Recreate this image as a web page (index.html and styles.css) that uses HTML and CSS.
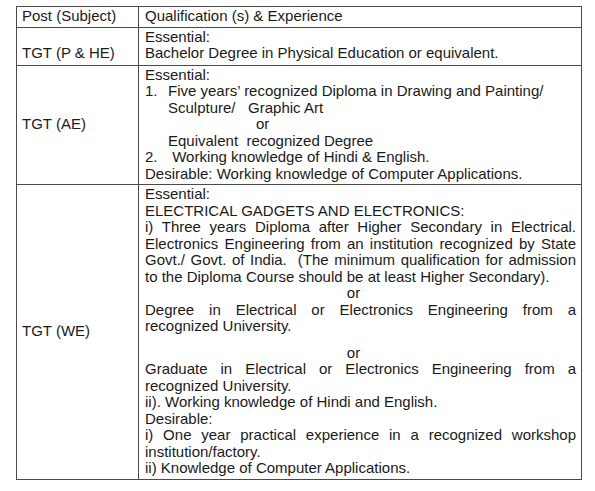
FILE: index.html
```html
<!DOCTYPE html>
<html>
<head>
<meta charset="utf-8">
<link rel="stylesheet" href="styles.css">
</head>
<body>
<table class="quals">
  <tr class="head">
    <td class="post">Post (Subject)</td>
    <td class="qual">Qualification (s) &amp; Experience</td>
  </tr>
  <tr class="r2">
    <td class="post bottom">TGT (P &amp; HE)</td>
    <td class="qual">
      <div>Essential:</div>
      <div>Bachelor Degree in Physical Education or equivalent.</div>
    </td>
  </tr>
  <tr class="r3">
    <td class="post">TGT (AE)</td>
    <td class="qual">
      <div>Essential:</div>
      <div><span class="num">1.</span>Five years’ recognized Diploma in Drawing and Painting/</div>
      <div class="ind">Sculpture/&nbsp;&nbsp; Graphic Art</div>
      <div class="or3">or</div>
      <div class="ind">Equivalent&nbsp; recognized Degree</div>
      <div><span class="num">2.</span>&nbsp;Working knowledge of Hindi &amp; English.</div>
      <div>Desirable: Working knowledge of Computer Applications.</div>
    </td>
  </tr>
  <tr class="r4">
    <td class="post">TGT (WE)</td>
    <td class="qual">
      <div>Essential:</div>
      <div>ELECTRICAL GADGETS AND ELECTRONICS:</div>
      <div class="j">i) Three years Diploma after Higher Secondary in Electrical.</div>
      <div class="j">Electronics Engineering from an institution recognized by State</div>
      <div class="j">Govt./ Govt. of India.&nbsp; (The minimum qualification for admission</div>
      <div>to the Diploma Course should be at least Higher Secondary).</div>
      <div class="or4">or</div>
      <div class="j">Degree in Electrical or Electronics Engineering from a</div>
      <div>recognized University.</div>
      <div class="blank"></div>
      <div class="or4">or</div>
      <div class="j">Graduate in Electrical or Electronics Engineering from a</div>
      <div>recognized University.</div>
      <div>ii). Working knowledge of Hindi and English.</div>
      <div>Desirable:</div>
      <div class="j">i) One year practical experience in a recognized workshop</div>
      <div>institution/factory.</div>
      <div>ii) Knowledge of Computer Applications.</div>
    </td>
  </tr>
</table>
</body>
</html>
```

FILE: styles.css
```css
html, body {
  margin: 0;
  padding: 0;
  background: #ffffff;
}

body {
  font-family: "Liberation Sans", Arial, sans-serif;
  font-size: 15px;
  color: #1a1a1a;
}

.quals {
  border-collapse: collapse;
  margin: 6px 0 0 16px;
  width: 566px;
  table-layout: fixed;
}

.quals td {
  border: 1px solid #4a4a4a;
  line-height: 16.5px;
  padding: 1px 5px 2px 6px;
}

.quals tr.r2 td {
  padding-bottom: 3px;
}

.quals td.post {
  width: 112px;
  padding-left: 5px;
  padding-right: 4px;
  vertical-align: middle;
}

.quals td.post.bottom {
  vertical-align: bottom;
}

.num {
  display: inline-block;
  width: 23px;
}

.ind {
  padding-left: 23px;
}

.or3 {
  padding-left: 111px;
}

.or4 {
  text-align: center;
  padding-right: 14px;
}

.j {
  text-align: justify;
  text-align-last: justify;
}

.blank {
  height: 10px;
}
```
